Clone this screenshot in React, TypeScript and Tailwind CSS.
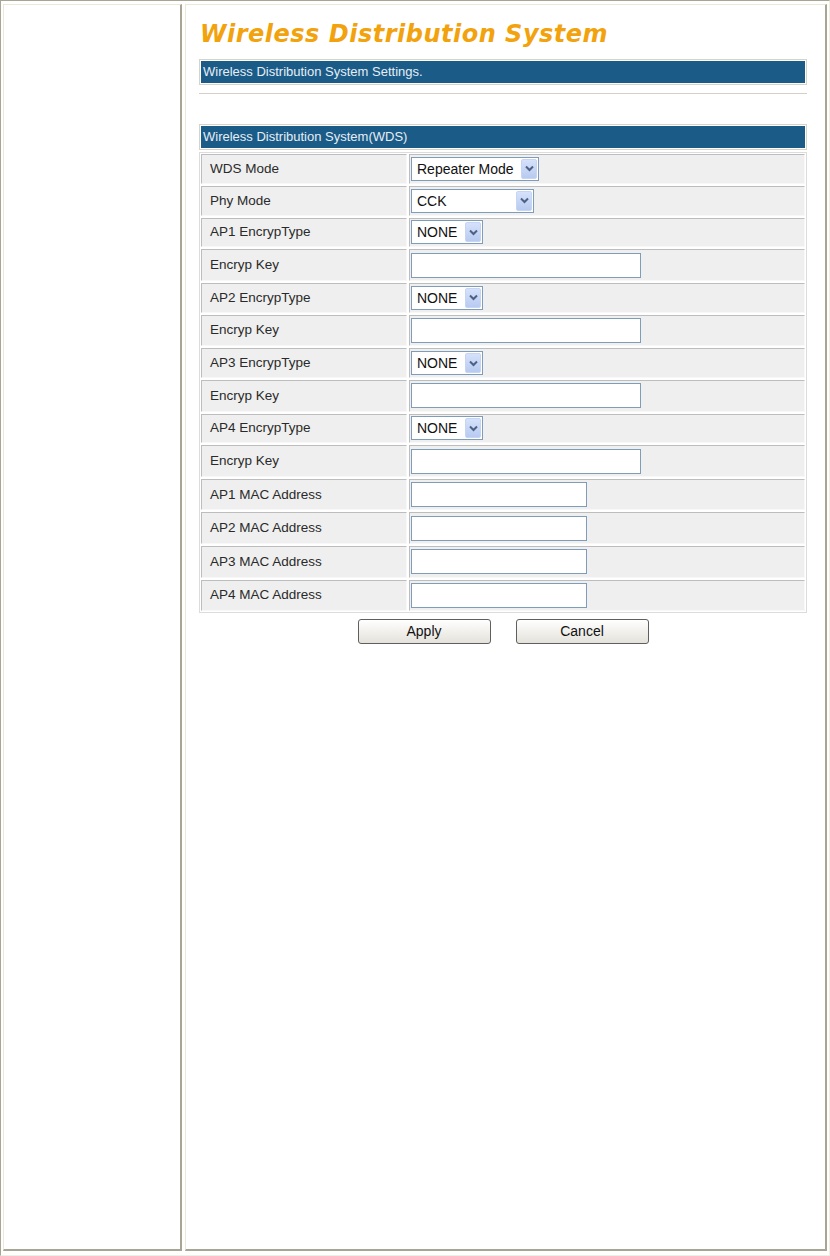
import React from "react";

type Row = { label: string; kind: "select" | "input"; value?: string; w: string };

const rows: Row[] = [
  { label: "WDS Mode", kind: "select", value: "Repeater Mode", w: "w-[128px]" },
  { label: "Phy Mode", kind: "select", value: "CCK", w: "w-[123px]" },
  { label: "AP1 EncrypType", kind: "select", value: "NONE", w: "w-[72px]" },
  { label: "Encryp Key", kind: "input", w: "w-[230px]" },
  { label: "AP2 EncrypType", kind: "select", value: "NONE", w: "w-[72px]" },
  { label: "Encryp Key", kind: "input", w: "w-[230px]" },
  { label: "AP3 EncrypType", kind: "select", value: "NONE", w: "w-[72px]" },
  { label: "Encryp Key", kind: "input", w: "w-[230px]" },
  { label: "AP4 EncrypType", kind: "select", value: "NONE", w: "w-[72px]" },
  { label: "Encryp Key", kind: "input", w: "w-[230px]" },
  { label: "AP1 MAC Address", kind: "input", w: "w-[176px]" },
  { label: "AP2 MAC Address", kind: "input", w: "w-[176px]" },
  { label: "AP3 MAC Address", kind: "input", w: "w-[176px]" },
  { label: "AP4 MAC Address", kind: "input", w: "w-[176px]" },
];

function Select({ value, w }: { value?: string; w: string }) {
  return (
    <div className={`${w} h-[24px] flex items-stretch border border-[#7f9db9] bg-white`}>
      <span className="flex-1 pl-[5px] text-[14px] leading-[22px] text-[#111] whitespace-nowrap overflow-hidden">{value}</span>
      <span className="m-[1px] w-[16px] rounded-[2px] bg-gradient-to-b from-[#d6e2fb] to-[#b7caf0] border border-[#c6d5f5] flex items-center justify-center">
        <svg width="9" height="7" viewBox="0 0 9 7">
          <path d="M1 1.5 L4.5 5 L8 1.5" stroke="#4d6185" strokeWidth="2" fill="none" />
        </svg>
      </span>
    </div>
  );
}

function Bar({ text }: { text: string }) {
  return (
    <div className="border border-[#d6d3c8] p-[1px] bg-white">
      <div className="bg-[#1b5b87] h-[22px] pl-[2px] text-[13px] leading-[22px] text-[#e6eef5]">{text}</div>
    </div>
  );
}

export default function App() {
  return (
    <div className="w-[830px] h-[1256px] bg-white border-t border-l border-t-[#a9a594] border-l-[#a9a594] border-r border-b border-r-[#f1efe2] border-b-[#f1efe2] pt-[3px] pb-[4px] pl-[2px] pr-[2px] flex gap-[3px] font-['Liberation_Sans',Arial,sans-serif]">
      {/* left menu cell (empty) */}
      <div className="w-[179px] h-full border-t border-l border-[#ece9d8] border-r-2 border-b-2 border-r-[#a9a594] border-b-[#a9a594]" />

      {/* main cell */}
      <div className="flex-1 h-full border-t border-l border-[#ece9d8] border-r-2 border-b-2 border-r-[#a9a594] border-b-[#a9a594] pl-[13px]">
        <div className="w-[608px]">
          <h1 className="mt-[11px] h-[36px] pl-[1px] font-['DejaVu_Sans',Verdana,sans-serif] font-bold italic text-[24px] leading-[36px] text-[#f2a20c] tracking-[0.5px]">
            Wireless Distribution System
          </h1>

          <div className="mt-[7px]">
            <Bar text="Wireless Distribution System Settings." />
          </div>
          <div className="h-[2px] mt-[8px] bg-[#d2d0c8] border-b border-b-white" />

          <div className="mt-[29px]">
            <Bar text="Wireless Distribution System(WDS)" />
          </div>

          <div className="mt-[2px] border border-[#dcdcdc] p-[1px] flex flex-col gap-[2px] bg-white">
            {rows.map((r, i) => (
              <div key={i} className={`grid grid-cols-[206px_1fr] gap-[2px] ${r.kind === "select" ? "h-[29.75px]" : "h-[31.6px]"}`}>
                <div className="bg-[#efefef] border-t border-l border-[#bdbdbd] border-r border-b border-r-[#f8f8f8] border-b-[#f8f8f8] pl-[8px] flex items-center text-[13.5px] text-[#2a2a2a]">
                  {r.label}
                </div>
                <div className="bg-[#efefef] border-t border-l border-[#bdbdbd] border-r border-b border-r-[#f8f8f8] border-b-[#f8f8f8] pl-[1px] flex items-center">
                  {r.kind === "select" ? (
                    <Select value={r.value} w={r.w} />
                  ) : (
                    <div className={`${r.w} h-[25px] border border-[#7f9db9] bg-white`} />
                  )}
                </div>
              </div>
            ))}
          </div>

          <div className="mt-[6px] flex justify-center gap-[25px]">
            <button className="w-[133px] h-[25px] rounded-[3px] border border-[#5f5f5f] bg-gradient-to-b from-white to-[#e4e2da] text-[14px] text-[#111]">
              Apply
            </button>
            <button className="w-[133px] h-[25px] rounded-[3px] border border-[#5f5f5f] bg-gradient-to-b from-white to-[#e4e2da] text-[14px] text-[#111]">
              Cancel
            </button>
          </div>
        </div>
      </div>
    </div>
  );
}
